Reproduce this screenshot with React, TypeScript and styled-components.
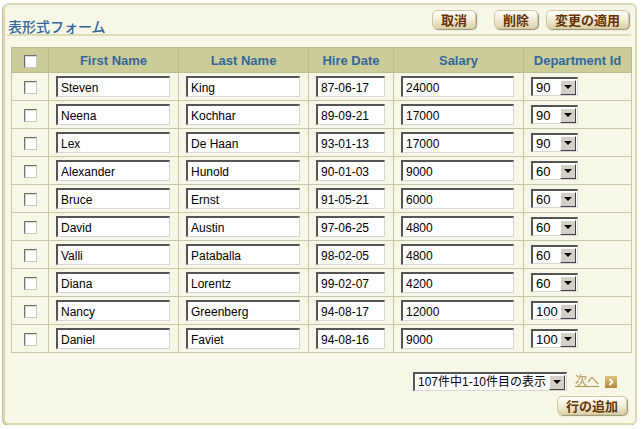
import React from "react";
import styled, { createGlobalStyle } from "styled-components";

const Global = createGlobalStyle`
  html, body { margin: 0; padding: 0; background: #ffffff; }
  body { font-family: "Liberation Sans", Arial, "Noto Sans CJK JP", sans-serif; }
`;

const Panel = styled.div`
  box-sizing: border-box;
  margin: 3px 0 0 3px;
  width: 634px;
  height: 422px;
  border: 2px solid #dcd9b4;
  border-radius: 6px;
  background: #f7f7e8;
  box-shadow: -1px 1px 0 #c7c39a;
  padding: 0 4px 0 6px;
  display: flex;
  flex-direction: column;
`;

const Header = styled.div`
  display: flex;
  justify-content: space-between;
  align-items: flex-start;
  height: 29px;
  border-bottom: 2px solid #dedbb8;
  margin: 0 0 0 -4px;
  padding: 0 2px 0 1px;
`;

const Title = styled.h1`
  margin: 13px 0 0 0;
  font-family: "Noto Sans CJK JP", sans-serif;
  font-weight: 500;
  font-size: 14px;
  line-height: 16px;
  color: #336699;
`;

const Buttons = styled.div`
  display: flex;
  margin-top: 5px;
`;

const Btn = styled.button<{ $ml?: number }>`
  box-sizing: border-box;
  height: 19px;
  padding: 0 8px;
  margin-left: ${(p) => p.$ml ?? 0}px;
  border: 1px solid #cfc8a2;
  border-radius: 5px;
  background: linear-gradient(#ffffff 0%, #f3efdc 45%, #ddd3ac 100%);
  box-shadow: 1px 1px 1px #9c9170;
  font-family: "Noto Sans CJK JP", sans-serif;
  font-weight: 700;
  font-size: 13px;
  line-height: 16px;
  color: #663300;
  cursor: pointer;
`;

const Table = styled.table`
  margin-top: 11px;
  border-collapse: collapse;
  table-layout: fixed;
  width: 620px;
  border: 1px solid #c5c3a0;
`;

const HeadCell = styled.th`
  height: 24px;
  padding: 0;
  background: #cccc99;
  border: 1px solid #bdbb93;
  color: #336699;
  font-size: 13px;
  font-weight: 700;
  text-align: center;
  vertical-align: middle;
`;

const Cell = styled.td<{ $center?: boolean }>`
  height: 27px;
  padding: 0 0 0 ${(p) => (p.$center ? 0 : 7)}px;
  border: 1px solid #c8c6a6;
  text-align: ${(p) => (p.$center ? "center" : "left")};
  vertical-align: middle;
`;

const Check = styled.span`
  display: inline-block;
  box-sizing: border-box;
  width: 13px;
  height: 13px;
  vertical-align: middle;
  background: #ffffff;
  border-top: 1px solid #6f6f6f;
  border-left: 1px solid #6f6f6f;
  border-right: 1px solid #c8c8c8;
  border-bottom: 1px solid #c8c8c8;
  box-shadow: inset 1px 1px 0 #d8d8d8;
`;

const Field = styled.input<{ $w: number }>`
  box-sizing: border-box;
  display: block;
  width: ${(p) => p.$w}px;
  height: 21px;
  margin: 0;
  padding: 1px 2px 0 3px;
  border-top: 2px solid #555555;
  border-left: 2px solid #555555;
  border-right: 1px solid #d6d6d6;
  border-bottom: 1px solid #d6d6d6;
  background: #ffffff;
  font-family: "Liberation Sans", Arial, sans-serif;
  font-size: 12px;
  color: #000000;
  outline: none;
`;

const SelectBox = styled.div<{ $w: number }>`
  box-sizing: border-box;
  display: flex;
  align-items: center;
  justify-content: space-between;
  width: ${(p) => p.$w}px;
  height: 19px;
  padding: 0 1px 0 3px;
  background: #ffffff;
  border-top: 2px solid #555555;
  border-left: 2px solid #555555;
  border-right: 1px solid #d6d6d6;
  border-bottom: 1px solid #d6d6d6;
  font-family: "Liberation Sans", Arial, "Noto Sans CJK JP", sans-serif;
  font-size: 12px;
  color: #000000;
`;

const SelectLabel = styled.span<{ $size?: number }>`
  font-size: ${(p) => p.$size ?? 13}px;
  line-height: 15px;
  white-space: nowrap;
`;

const DropBtn = styled.span`
  box-sizing: border-box;
  display: flex;
  align-items: center;
  justify-content: center;
  width: 16px;
  height: 15px;
  background: #d4d0c8;
  border-top: 1px solid #ffffff;
  border-left: 1px solid #ffffff;
  border-right: 1px solid #404040;
  border-bottom: 1px solid #404040;
`;

const Tri = styled.span`
  width: 0;
  height: 0;
  border-left: 4px solid transparent;
  border-right: 4px solid transparent;
  border-top: 4px solid #000000;
`;

const Footer = styled.div`
  display: flex;
  flex-direction: column;
  align-items: flex-end;
  padding-right: 4px;
`;

const Pager = styled.div`
  display: flex;
  align-items: center;
  margin-top: 19px;
  margin-right: 10px;
  gap: 8px;
`;

const NextLink = styled.a`
  font-family: "Noto Sans CJK JP", sans-serif;
  font-size: 12px;
  line-height: 16px;
  color: #b3954f;
  text-decoration: underline;
  margin-top: -4px;
`;

const NextIcon = styled.svg`
  display: block;
  margin-left: -2px;
`;

const AddRow = styled(Btn)`
  margin-top: 5px;
  padding: 0 8px;
`;

type Emp = { f: string; l: string; d: string; s: string; dep: string };

const rows: Emp[] = [
  { f: "Steven", l: "King", d: "87-06-17", s: "24000", dep: "90" },
  { f: "Neena", l: "Kochhar", d: "89-09-21", s: "17000", dep: "90" },
  { f: "Lex", l: "De Haan", d: "93-01-13", s: "17000", dep: "90" },
  { f: "Alexander", l: "Hunold", d: "90-01-03", s: "9000", dep: "60" },
  { f: "Bruce", l: "Ernst", d: "91-05-21", s: "6000", dep: "60" },
  { f: "David", l: "Austin", d: "97-06-25", s: "4800", dep: "60" },
  { f: "Valli", l: "Pataballa", d: "98-02-05", s: "4800", dep: "60" },
  { f: "Diana", l: "Lorentz", d: "99-02-07", s: "4200", dep: "60" },
  { f: "Nancy", l: "Greenberg", d: "94-08-17", s: "12000", dep: "100" },
  { f: "Daniel", l: "Faviet", d: "94-08-16", s: "9000", dep: "100" },
];

const Select = ({ value, w, size }: { value: string; w: number; size?: number }) => (
  <SelectBox $w={w}>
    <SelectLabel $size={size}>{value}</SelectLabel>
    <DropBtn>
      <Tri />
    </DropBtn>
  </SelectBox>
);

export default function App() {
  return (
    <>
      <Global />
      <Panel>
        <Header>
          <Title>表形式フォーム</Title>
          <Buttons>
            <Btn>取消</Btn>
            <Btn $ml={18}>削除</Btn>
            <Btn $ml={8}>変更の適用</Btn>
          </Buttons>
        </Header>
        <Table>
          <colgroup>
            <col style={{ width: 37 }} />
            <col style={{ width: 130 }} />
            <col style={{ width: 130 }} />
            <col style={{ width: 85 }} />
            <col style={{ width: 130 }} />
            <col style={{ width: 108 }} />
          </colgroup>
          <thead>
            <tr>
              <HeadCell>
                <Check />
              </HeadCell>
              <HeadCell>First Name</HeadCell>
              <HeadCell>Last Name</HeadCell>
              <HeadCell>Hire Date</HeadCell>
              <HeadCell>Salary</HeadCell>
              <HeadCell>Department Id</HeadCell>
            </tr>
          </thead>
          <tbody>
            {rows.map((r) => (
              <tr key={r.f}>
                <Cell $center>
                  <Check />
                </Cell>
                <Cell>
                  <Field $w={114} defaultValue={r.f} />
                </Cell>
                <Cell>
                  <Field $w={114} defaultValue={r.l} />
                </Cell>
                <Cell>
                  <Field $w={69} defaultValue={r.d} />
                </Cell>
                <Cell>
                  <Field $w={113} defaultValue={r.s} />
                </Cell>
                <Cell>
                  <Select value={r.dep} w={47} />
                </Cell>
              </tr>
            ))}
          </tbody>
        </Table>
        <Footer>
          <Pager>
            <Select value="107件中1-10件目の表示" w={154} size={12} />
            <NextLink href="#">次へ</NextLink>
            <NextIcon width="12" height="12" viewBox="0 0 12 12">
              <defs>
                <linearGradient id="ng" x1="0" y1="0" x2="0" y2="1">
                  <stop offset="0" stopColor="#e2c27e" />
                  <stop offset="1" stopColor="#b38a3e" />
                </linearGradient>
              </defs>
              <rect x="0" y="0" width="12" height="12" fill="url(#ng)" />
              <path d="M4.5 3 L7.5 6 L4.5 9" stroke="#ffffff" strokeWidth="1.8" fill="none" />
            </NextIcon>
          </Pager>
          <AddRow>行の追加</AddRow>
        </Footer>
      </Panel>
    </>
  );
}
